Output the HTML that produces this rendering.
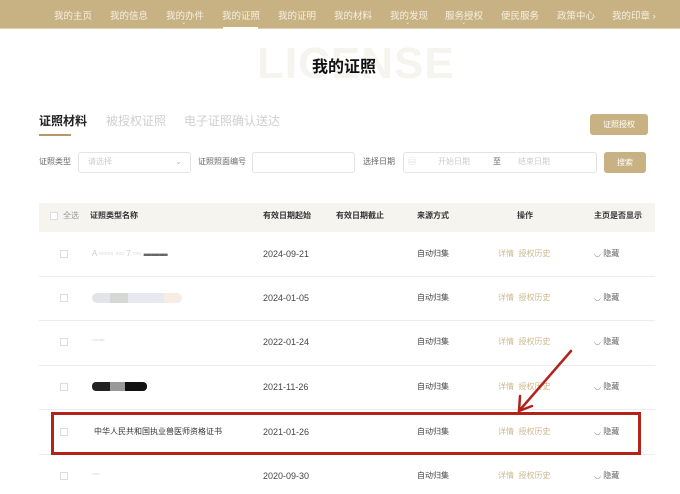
<!DOCTYPE html>
<html><head><meta charset="utf-8"><style>
*{margin:0;padding:0;box-sizing:border-box}
body{width:680px;height:494px;background:#fff;position:relative;overflow:hidden;font-family:"Liberation Sans","Noto Sans CJK SC",sans-serif;color:#333}
.a{position:absolute;white-space:nowrap;line-height:1.2}
.nav{position:absolute;left:0;top:0;width:680px;height:29px;background:#c8b283;border-bottom:1px solid #ddd2b8}
.nav span{position:absolute;top:8px;font-size:9.5px;color:#f6f0e3}
.chev{position:absolute;top:19px;font-size:6px;color:#f2ead8}
.cb{position:absolute;width:8px;height:8px;border:1px solid #ddd;background:#fff}
.row{position:absolute;left:39px;width:616px;height:1px;background:#ececec}
.t{font-size:9px;color:#444}
.g{font-size:8px;color:#cdb98e}
.inp{position:absolute;height:21px;border:1px solid #e3e3e3;border-radius:3px;background:#fff}
</style></head><body>
<div class="nav">
<span style="left:54px">我的主页</span><span style="left:110px">我的信息</span><span style="left:166px">我的办件</span><span style="left:222px">我的证照</span><span style="left:278px">我的证明</span><span style="left:334px">我的材料</span><span style="left:390px">我的发现</span><span style="left:445px">服务授权</span><span style="left:501px">便民服务</span><span style="left:557px">政策中心</span><span style="left:612px">我的印章 ›</span>
<i class="chev" style="left:181px">⌄</i><i class="chev" style="left:405px">⌄</i><i class="chev" style="left:461px">⌄</i>
</div>
<div class="a" style="left:223px;top:27px;width:35px;height:3px;background:#fff"></div>
<div class="a" style="left:257px;top:38px;font-size:44px;font-weight:bold;color:#f6f4ee;letter-spacing:1px">LICENSE</div>
<div class="a" style="left:312px;top:58px;font-size:16px;font-weight:bold;color:#111">我的证照</div>

<div class="a" style="left:39px;top:114px;font-size:12px;font-weight:bold;color:#222">证照材料</div>
<div class="a" style="left:106px;top:114px;font-size:12px;color:#cfcfcf">被授权证照</div>
<div class="a" style="left:184px;top:114px;font-size:12px;color:#cfcfcf">电子证照确认送达</div>
<div class="a" style="left:39px;top:134px;width:32px;height:2px;background:#b59a65"></div>
<div class="a" style="left:590px;top:114px;width:58px;height:21px;background:#c8b283;border-radius:3px;color:#fff;font-size:8px;text-align:center;line-height:21px">证照授权</div>

<div class="a t" style="left:39px;top:157px;font-size:8px;color:#666">证照类型</div>
<div class="inp" style="left:78px;top:152px;width:113px"><span class="a" style="left:9px;top:4px;font-size:8px;color:#ccc">请选择</span><span class="a" style="right:8px;top:4px;font-size:8px;color:#bbb">⌄</span></div>
<div class="a" style="left:198px;top:157px;font-size:8px;color:#666">证照照面编号</div>
<div class="inp" style="left:252px;top:152px;width:103px"></div>
<div class="a" style="left:363px;top:157px;font-size:8px;color:#666">选择日期</div>
<div class="inp" style="left:403px;top:152px;width:194px"><span class="a" style="left:4px;top:4px;font-size:8px;color:#ccc">▤</span><span class="a" style="left:34px;top:4px;font-size:8px;color:#ccc">开始日期</span><span class="a" style="left:89px;top:4px;font-size:8px;color:#666">至</span><span class="a" style="left:114px;top:4px;font-size:8px;color:#ccc">结束日期</span></div>
<div class="a" style="left:604px;top:152px;width:42px;height:21px;background:#c8b283;border-radius:3px;color:#fff;font-size:8px;text-align:center;line-height:21px">搜索</div>

<div class="a" style="left:39px;top:203px;width:616px;height:29px;background:#f6f4ee"></div>
<div class="cb" style="left:50px;top:212px"></div>
<div class="a" style="left:63px;top:211px;font-size:8px;color:#999">全选</div>
<div class="a" style="left:90px;top:211px;font-size:8px;font-weight:bold;color:#333">证照类型名称</div>
<div class="a" style="left:263px;top:211px;font-size:8px;font-weight:bold;color:#333">有效日期起始</div>
<div class="a" style="left:336px;top:211px;font-size:8px;font-weight:bold;color:#333">有效日期截止</div>
<div class="a" style="left:417px;top:211px;font-size:8px;font-weight:bold;color:#333">来源方式</div>
<div class="a" style="left:517px;top:211px;font-size:8px;font-weight:bold;color:#333">操作</div>
<div class="a" style="left:594px;top:211px;font-size:8px;font-weight:bold;color:#333">主页是否显示</div>

<div class="row" style="top:276px"></div><div class="row" style="top:320px"></div><div class="row" style="top:365px"></div><div class="row" style="top:409px"></div><div class="row" style="top:454px"></div>

<div class="cb" style="left:60px;top:250px"></div><div class="cb" style="left:60px;top:294px"></div><div class="cb" style="left:60px;top:338px"></div><div class="cb" style="left:60px;top:383px"></div><div class="cb" style="left:60px;top:428px"></div><div class="cb" style="left:60px;top:472px"></div>

<div class="a" style="left:92px;top:249px;font-size:8px;color:#ccc">A ▫▫▫▫▫ ▫▫▫ 7 ▫▫▫ <span style="color:#666">▬▬▬</span></div>
<div class="a" style="left:92px;top:293px;width:90px;height:10px;border-radius:5px;background:linear-gradient(90deg,#e2e4ea 0 20%,#d3d8d3 20% 40%,#e6e9ef 40% 80%,#f7ece4 80%)"></div>
<div class="a" style="left:92px;top:337px;font-size:7px;color:#ccc">▫▫▫▫▫</div>
<div class="a" style="left:92px;top:382px;width:55px;height:9px;border-radius:4px;background:linear-gradient(90deg,#222 0 33%,#999 33% 60%,#111 60%)"></div>
<div class="a" style="left:94px;top:427px;font-size:8px;color:#333">中华人民共和国执业兽医师资格证书</div>
<div class="a" style="left:92px;top:471px;font-size:7px;color:#ccc">▫▫▫</div>

<div class="a t" style="left:263px;top:249px">2024-09-21</div>
<div class="a t" style="left:263px;top:293px">2024-01-05</div>
<div class="a t" style="left:263px;top:337px">2022-01-24</div>
<div class="a t" style="left:263px;top:382px">2021-11-26</div>
<div class="a t" style="left:263px;top:427px">2021-01-26</div>
<div class="a t" style="left:263px;top:471px">2020-09-30</div>

<div class="a" style="left:417px;top:249px;font-size:8px;color:#444">自动归集</div>
<div class="a" style="left:417px;top:293px;font-size:8px;color:#444">自动归集</div>
<div class="a" style="left:417px;top:337px;font-size:8px;color:#444">自动归集</div>
<div class="a" style="left:417px;top:382px;font-size:8px;color:#444">自动归集</div>
<div class="a" style="left:417px;top:427px;font-size:8px;color:#444">自动归集</div>
<div class="a" style="left:417px;top:471px;font-size:8px;color:#444">自动归集</div>

<div class="a g" style="left:498px;top:249px">详情 &nbsp;授权历史</div>
<div class="a g" style="left:498px;top:293px">详情 &nbsp;授权历史</div>
<div class="a g" style="left:498px;top:337px">详情 &nbsp;授权历史</div>
<div class="a g" style="left:498px;top:382px">详情 &nbsp;授权历史</div>
<div class="a g" style="left:498px;top:427px">详情 &nbsp;授权历史</div>
<div class="a g" style="left:498px;top:471px">详情 &nbsp;授权历史</div>

<div class="a" style="left:594px;top:249px;font-size:8px;color:#666"><span style="color:#999">◡</span> 隐藏</div>
<div class="a" style="left:594px;top:293px;font-size:8px;color:#666"><span style="color:#999">◡</span> 隐藏</div>
<div class="a" style="left:594px;top:337px;font-size:8px;color:#666"><span style="color:#999">◡</span> 隐藏</div>
<div class="a" style="left:594px;top:382px;font-size:8px;color:#666"><span style="color:#999">◡</span> 隐藏</div>
<div class="a" style="left:594px;top:427px;font-size:8px;color:#666"><span style="color:#999">◡</span> 隐藏</div>
<div class="a" style="left:594px;top:471px;font-size:8px;color:#666"><span style="color:#999">◡</span> 隐藏</div>

<div class="a" style="left:51px;top:412px;width:590px;height:43px;border:3px solid #b3221b"></div>
<svg class="a" style="left:0;top:0" width="680" height="494"><g stroke="#b3221b" stroke-width="2.5" fill="none" stroke-linecap="round"><path d="M571 351 L519 411"/><path d="M519 411 L520 396"/><path d="M519 411 L532 406"/></g></svg>
</body></html>
